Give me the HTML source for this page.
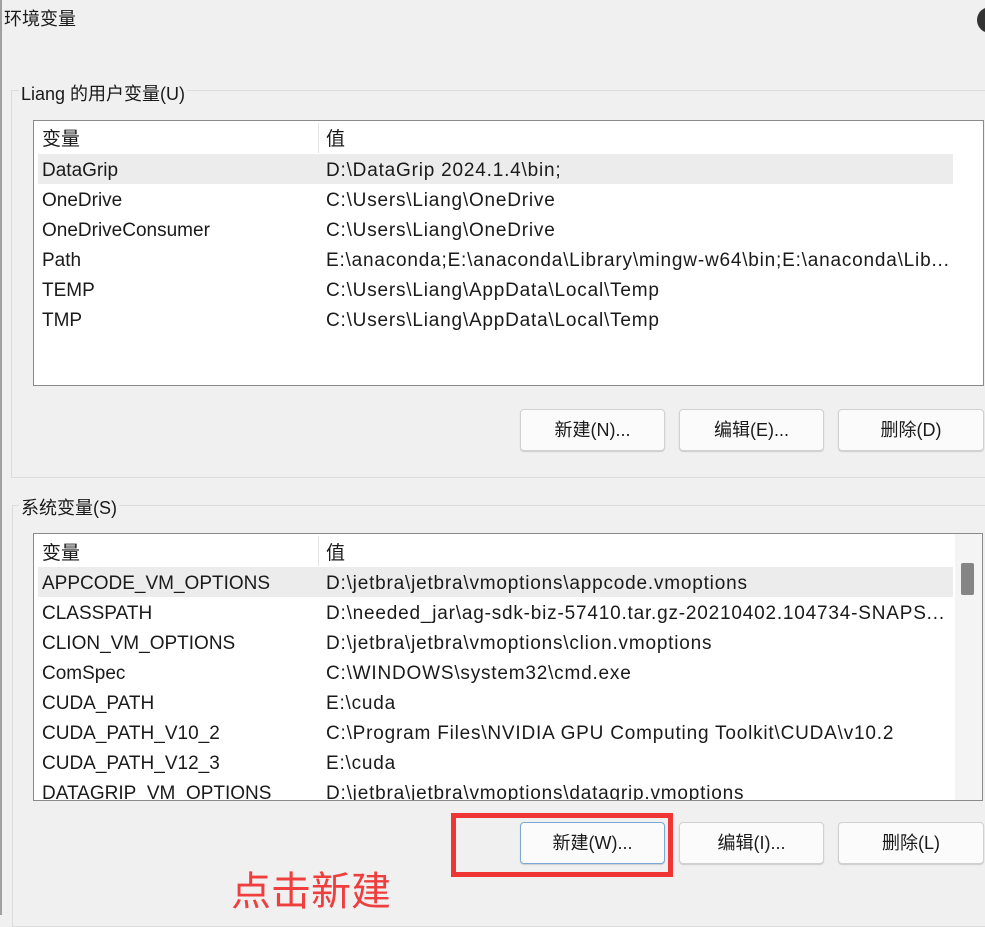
<!DOCTYPE html>
<html><head><meta charset="utf-8"><style>
body{margin:0;width:985px;height:915px;background:#f0f0f0;position:relative;overflow:hidden;font-family:"Liberation Sans","Noto Sans CJK SC",sans-serif;color:#1a1a1a}
.a{position:absolute}
.grp{position:absolute;border:1px solid #dcdcdc;border-right:none}
.lbl{position:absolute;background:#f0f0f0;font-size:18px;padding:0 2px}
.list{position:absolute;background:#fff;border:1px solid #8a8a8a;overflow:hidden}
.row{position:absolute;left:4px;height:30px;line-height:33px;font-size:19px;white-space:nowrap}
.row span{position:absolute}
.row span+span{letter-spacing:0.8px}
.btn{position:absolute;background:#fbfbfb;border:1px solid #d0d0d0;border-radius:4px;font-size:18px;text-align:center;box-shadow:0 1px 1px #ccc}
</style></head><body>
<div class="a" style="left:0;top:0;width:2px;height:915px;background:#a0a0a0"></div>
<div class="a" style="left:4px;top:5px;font-size:18px">环境变量</div>
<div class="a" style="left:977px;top:7px;width:26px;height:26px;border-radius:50%;background:#333"></div>

<div class="grp" style="left:11px;top:90px;width:974px;height:386px"></div>
<div class="lbl" style="left:19px;top:80px">Liang 的用户变量(U)</div>
<div class="list" style="left:33px;top:120px;width:949px;height:264px">
 <div class="a" style="left:284px;top:2px;width:1px;height:30px;background:#e5e5e5"></div>
 <div class="row" style="top:2px"><span style="left:4px">变量</span><span style="left:288px">值</span></div>
 <div class="a" style="left:4px;top:33px;width:915px;height:30px;background:#ececec"></div>
 <div class="row" style="top:33px"><span style="left:4px">DataGrip</span><span style="left:288px">D:\DataGrip 2024.1.4\bin;</span></div>
 <div class="row" style="top:63px"><span style="left:4px">OneDrive</span><span style="left:288px">C:\Users\Liang\OneDrive</span></div>
 <div class="row" style="top:93px"><span style="left:4px">OneDriveConsumer</span><span style="left:288px">C:\Users\Liang\OneDrive</span></div>
 <div class="row" style="top:123px"><span style="left:4px">Path</span><span style="left:288px">E:\anaconda;E:\anaconda\Library\mingw-w64\bin;E:\anaconda\Lib...</span></div>
 <div class="row" style="top:153px"><span style="left:4px">TEMP</span><span style="left:288px">C:\Users\Liang\AppData\Local\Temp</span></div>
 <div class="row" style="top:183px"><span style="left:4px">TMP</span><span style="left:288px">C:\Users\Liang\AppData\Local\Temp</span></div>
</div>
<div class="btn" style="left:520px;top:409px;width:143px;height:40px;line-height:41px">新建(N)...</div>
<div class="btn" style="left:679px;top:409px;width:143px;height:40px;line-height:41px">编辑(E)...</div>
<div class="btn" style="left:838px;top:409px;width:144px;height:40px;line-height:41px">删除(D)</div>

<div class="grp" style="left:12px;top:505px;width:973px;height:420px"></div>
<div class="lbl" style="left:19px;top:494px">系统变量(S)</div>
<div class="list" style="left:33px;top:533px;width:948px;height:266px">
 <div class="a" style="left:284px;top:2px;width:1px;height:30px;background:#e5e5e5"></div>
 <div class="row" style="top:3px"><span style="left:4px">变量</span><span style="left:288px">值</span></div>
 <div class="a" style="left:4px;top:33px;width:915px;height:30px;background:#ececec"></div>
 <div class="row" style="top:33px"><span style="left:4px">APPCODE_VM_OPTIONS</span><span style="left:288px">D:\jetbra\jetbra\vmoptions\appcode.vmoptions</span></div>
 <div class="row" style="top:63px"><span style="left:4px">CLASSPATH</span><span style="left:288px">D:\needed_jar\ag-sdk-biz-57410.tar.gz-20210402.104734-SNAPS...</span></div>
 <div class="row" style="top:93px"><span style="left:4px">CLION_VM_OPTIONS</span><span style="left:288px">D:\jetbra\jetbra\vmoptions\clion.vmoptions</span></div>
 <div class="row" style="top:123px"><span style="left:4px">ComSpec</span><span style="left:288px">C:\WINDOWS\system32\cmd.exe</span></div>
 <div class="row" style="top:153px"><span style="left:4px">CUDA_PATH</span><span style="left:288px">E:\cuda</span></div>
 <div class="row" style="top:183px"><span style="left:4px">CUDA_PATH_V10_2</span><span style="left:288px">C:\Program Files\NVIDIA GPU Computing Toolkit\CUDA\v10.2</span></div>
 <div class="row" style="top:213px"><span style="left:4px">CUDA_PATH_V12_3</span><span style="left:288px">E:\cuda</span></div>
 <div class="row" style="top:243px"><span style="left:4px">DATAGRIP_VM_OPTIONS</span><span style="left:288px">D:\jetbra\jetbra\vmoptions\datagrip.vmoptions</span></div>
 <div class="a" style="left:921px;top:0;width:27px;height:266px;background:#f4f4f4"></div>
 <div class="a" style="left:927px;top:29px;width:13px;height:32px;background:#858585;border-radius:2px"></div>
</div>
<div class="btn" style="left:520px;top:822px;width:143px;height:40px;line-height:41px;border-color:#7aa7d8">新建(W)...</div>
<div class="btn" style="left:679px;top:822px;width:143px;height:40px;line-height:41px">编辑(I)...</div>
<div class="btn" style="left:838px;top:822px;width:144px;height:40px;line-height:41px">删除(L)</div>
<div class="a" style="left:451px;top:813px;width:212px;height:54px;border:5px solid #f03535"></div>
<div class="a" style="left:231px;top:867px;font-size:40px;line-height:50px;color:#ef3e3e">点击新建</div>
</body></html>
